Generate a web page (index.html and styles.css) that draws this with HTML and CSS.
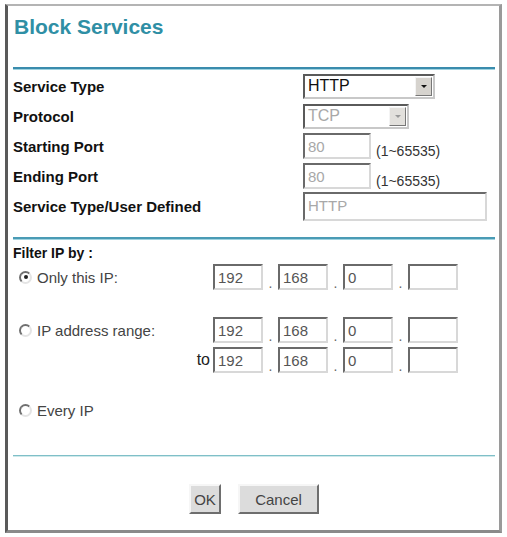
FILE: index.html
```html
<!DOCTYPE html>
<html lang="en">
<head>
  <meta charset="UTF-8" />
  <title>Block Services</title>
  <link rel="stylesheet" href="styles.css">
</head>
<body>
  <div class="frame">
    <h1 class="title">Block Services</h1>
    <div class="rule"></div>

    <div class="row">
      <span class="label">Service Type</span>
      <div class="select wide"><span class="val">HTTP</span><span class="drop"><i></i></span></div>
    </div>
    <div class="row">
      <span class="label">Protocol</span>
      <div class="select narrow off"><span class="val">TCP</span><span class="drop"><i></i></span></div>
    </div>
    <div class="row">
      <span class="label">Starting Port</span>
      <div class="box port off">80</div>
      <span class="hint">(1~65535)</span>
    </div>
    <div class="row">
      <span class="label">Ending Port</span>
      <div class="box port off">80</div>
      <span class="hint">(1~65535)</span>
    </div>
    <div class="row">
      <span class="label">Service Type/User Defined</span>
      <div class="box user off">HTTP</div>
    </div>

    <div class="rule mid"></div>
    <div class="section">Filter IP by :</div>

    <div class="ip-row first">
      <span class="opt"><span class="radio on"></span>Only this IP:</span>
      <div class="ip">
        <div class="box oct">192</div><span class="dot">.</span>
        <div class="box oct">168</div><span class="dot">.</span>
        <div class="box oct">0</div><span class="dot">.</span>
        <div class="box oct"></div>
      </div>
    </div>
    <div class="ip-row range">
      <span class="opt"><span class="radio"></span>IP address range:</span>
      <div class="ip">
        <div class="box oct">192</div><span class="dot">.</span>
        <div class="box oct">168</div><span class="dot">.</span>
        <div class="box oct">0</div><span class="dot">.</span>
        <div class="box oct"></div>
      </div>
    </div>
    <div class="ip-row to">
      <span class="opt end">to</span>
      <div class="ip">
        <div class="box oct">192</div><span class="dot">.</span>
        <div class="box oct">168</div><span class="dot">.</span>
        <div class="box oct">0</div><span class="dot">.</span>
        <div class="box oct"></div>
      </div>
    </div>
    <div class="ip-row every">
      <span class="opt"><span class="radio"></span>Every IP</span>
    </div>

    <div class="rule thin"></div>
    <div class="buttons">
      <button class="btn ok">OK</button>
      <button class="btn cancel">Cancel</button>
    </div>
  </div>
</body>
</html>
```

FILE: styles.css
```css
body { margin: 0; background: #fff; font-family: "Liberation Sans", Arial, sans-serif; color: #111; }
.frame { box-sizing: border-box; width: 497px; height: 529px; margin: 4px 0 0 5px; padding: 0 4px 0 5px;
  border-style: solid; border-width: 2px 3px 3px 3px; border-color: #b4b4b4 #9a9a9a #8a8a8a #5a5a5a; }
.title { margin: 9px 0 0 1px; font-size: 21px; line-height: 24px; font-weight: bold; color: #2f8fa5; }
.rule { height: 2px; margin-top: 28px; background: #3a8cad; box-shadow: 0 1px 0 #9fd3e0; }
.rule.mid { margin-top: 16px; background: #4a9bb5; }
.rule.thin { height: 1px; margin-top: 36px; background: #7fbfc8; box-shadow: 0 1px 0 #cfe9ea; }

.row { display: flex; align-items: center; height: 30px; }
.rule + .row { margin-top: 2px; }
.label { width: 290px; font-size: 15px; font-weight: bold; }
.hint { margin: 9px 0 0 5px; font-size: 14px; color: #333; }

.box { box-sizing: border-box; height: 26px; padding: 3px 0 0 3px; background: #fff; font-size: 15px; color: #555;
  border: 2px solid; border-color: #6a6a6a #d8d8d8 #d8d8d8 #6a6a6a; white-space: nowrap; }
.box.off { color: #a8a8a8; }
.port { width: 68px; }
.user { width: 184px; height: 29px; }

.select { box-sizing: border-box; display: flex; align-items: center; justify-content: space-between; height: 25px;
  border: 2px solid; border-color: #5a5a5a #c8c8c8 #c8c8c8 #5a5a5a; background: #fff; }
.select.wide { width: 132px; }
.select.narrow { width: 106px; }
.select .val { padding-left: 3px; font-size: 16px; color: #111; }
.select.off .val { color: #a8a8a8; }
.drop { box-sizing: border-box; display: flex; align-items: center; justify-content: center; width: 17px; height: 19px;
  margin-right: 1px; background: #d6d3ce; border: 1px solid; border-color: #f4f4f4 #777 #777 #f4f4f4; }
.drop i { width: 0; height: 0; border-left: 3px solid transparent; border-right: 3px solid transparent; border-top: 3px solid #111; }
.select.off .drop { background: #e2e0dc; }
.select.off .drop i { border-top-color: #999; }

.section { margin-top: 5px; font-size: 14px; line-height: 18px; font-weight: bold; }

.ip-row { display: flex; align-items: center; height: 26px; }
.ip-row.first { margin-top: 2px; }
.ip-row.range { margin-top: 27px; }
.ip-row.to { margin-top: 4px; }
.ip-row.every { margin-top: 28px; height: 18px; }
.opt { display: flex; align-items: center; width: 200px; font-size: 15px; color: #444; }
.opt.end { justify-content: flex-end; padding-right: 3px; box-sizing: border-box; font-size: 16px; color: #222; }
.radio { box-sizing: border-box; display: flex; align-items: center; justify-content: center; width: 13px; height: 13px;
  margin: 0 5px 0 6px; border-radius: 50%; border: 2px solid; border-color: #707070 #e4e4e4 #e4e4e4 #707070; background: #fff; }
.radio.on::after { content: ""; width: 4px; height: 4px; border-radius: 50%; background: #222; }

.ip { display: flex; align-items: flex-end; }
.oct { width: 50px; }
.dot { width: 15px; text-align: center; font-size: 14px; line-height: 14px; color: #666; }

.buttons { display: flex; justify-content: center; gap: 17px; margin-top: 28px; }
.btn { box-sizing: border-box; height: 30px; padding: 0; font-family: inherit; font-size: 15px; color: #444; background: #dcdcdc;
  border: 2px solid; border-color: #f6f6f6 #6e6e6e #6e6e6e #f6f6f6; }
.btn.ok { width: 32px; }
.btn.cancel { width: 81px; }
```
